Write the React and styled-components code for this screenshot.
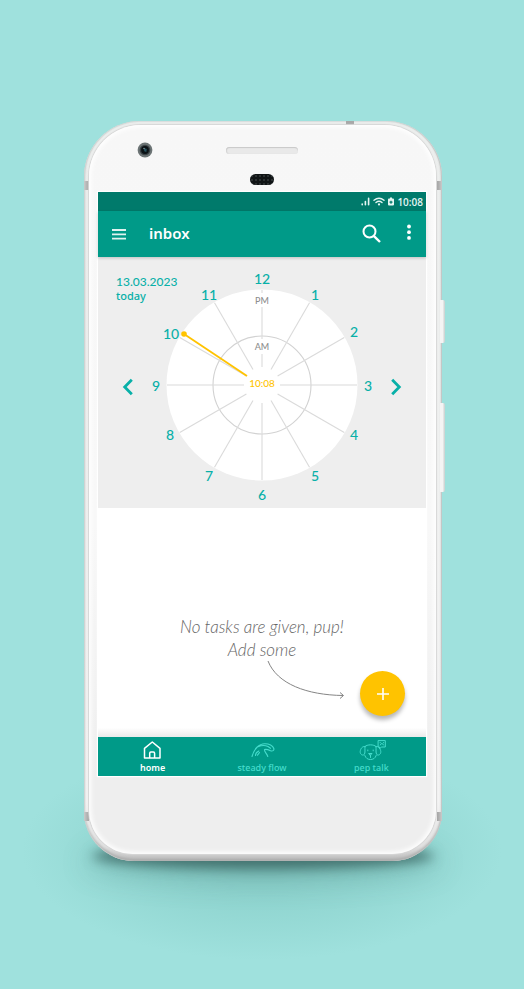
import React from "react";
import styled, { createGlobalStyle, css } from "styled-components";

const teal = "#009a88";
const aqua = "#08b0a8";
const amber = "#ffc300";

const GlobalStyle = createGlobalStyle`
  *, *::before, *::after { box-sizing: border-box; }
  body {
    margin: 0;
    background: #9fe1dd;
    font-family: "Noto Sans", "Open Sans", sans-serif;
  }
  button { border: 0; padding: 0; background: none; font: inherit; color: inherit; cursor: pointer; }
  svg { display: block; }
`;

const Page = styled.div`
  min-height: 100vh;
  padding: 121px 82px 128px 84px;
  display: flex;
  justify-content: center;
  align-items: flex-start;
  background: radial-gradient(ellipse 240px 110px at 50% 850px, #87cbc6 0%, #90d5d0 45%, rgba(159, 225, 221, 0) 100%), #9fe1dd;
`;

const Stage = styled.div`
  position: relative;
  z-index: 0;
  flex: 1;
  max-width: 420px;
  &::before {
    content: "";
    position: absolute;
    z-index: -1;
    left: 14px;
    right: 14px;
    bottom: 8px;
    height: 14px;
    border-radius: 50%;
    box-shadow: 0 10px 12px 6px rgba(45, 85, 82, 0.7), 0 16px 28px 12px rgba(65, 125, 120, 0.3);
  }
`;

const Frame = styled.div`
  position: relative;
  z-index: 0;
  padding: 4px 6px 7px 5px;
  border-radius: 56px 56px 50px 50px;
  background: linear-gradient(180deg, #eceeed 0%, #f4f4f4 92%, #e2e2e2 98%, #bcbcbc 100%);
  box-shadow: inset 1px 0 1px #cfd3d2, inset -1px 0 1px #c2c6c5, inset 0 1px 1px #dde2e1, inset 0 -2px 3px #a9a9a9;
`;

const Glass = styled.div`
  position: relative;
  padding: 0 10px 0 9px;
  border-radius: 52px 52px 44px 44px;
  background: linear-gradient(180deg, #f7f7f7 0%, #f8f8f8 55%, #eeeeee 90%, #eeeeee 100%);
  box-shadow: 0 0 1px 1px #d6d6d6, inset 0 0 5px 2px #ffffff;
`;

const Band = styled.span`
  position: absolute;
  width: 5px;
  height: 9px;
  background: linear-gradient(90deg, #cacaca, #a2a2a2);
  ${(p) => (p.$side === "left" ? css`left: 0;` : css`right: 0; transform: scaleX(-1);`)}
  ${(p) => (p.$end === "top" ? css`top: 60px;` : css`bottom: 40px;`)}
`;

const TopBand = styled.span`
  position: absolute;
  top: 0;
  right: 88px;
  width: 8px;
  height: 4px;
  background: #a8a8a8;
`;

const SideKey = styled.span`
  position: absolute;
  z-index: -1;
  right: -3px;
  top: ${(p) => p.$top}px;
  width: 5px;
  height: ${(p) => p.$length}px;
  border-radius: 0 2px 2px 0;
  background: linear-gradient(90deg, #f4f4f4 50%, #c7cecd);
`;

const UpperBezel = styled.div`
  height: 67px;
  display: grid;
  grid-template-columns: 1fr 72px 1fr;
`;

const Camera = styled.svg`
  width: 16px;
  height: 16px;
  margin: 17px 0 0 39px;
`;

const Openings = styled.div`
  display: flex;
  flex-direction: column;
  align-items: center;
  gap: 20px;
  padding-top: 22px;
`;

const Speaker = styled.span`
  width: 72px;
  height: 7px;
  border-radius: 4px;
  background: #e9e9e9;
  box-shadow: inset 0 1px 1px #c8c8c8, inset 1px 0 1px #d4d4d4;
`;

const Sensor = styled.span`
  width: 24px;
  height: 11px;
  border-radius: 6px;
  background: radial-gradient(circle, #2b3031 1px, #101415 1px) 0 0 / 4px 4px;
`;

const LowerBezel = styled.div`
  height: 78px;
`;

const Screen = styled.main`
  display: flex;
  flex-direction: column;
  background: #ffffff;
  box-shadow: 0 0 1px 1px #ffffff;
`;

const StatusBar = styled.div`
  height: 19px;
  padding-right: 3px;
  display: flex;
  align-items: center;
  justify-content: flex-end;
  gap: 3px;
  background: #007a6b;
  color: #e5f6f3;
  font-family: "Open Sans", sans-serif;
  font-size: 10px;
  font-weight: 600;
`;

const AppBar = styled.header`
  position: relative;
  height: 46px;
  padding: 0 12px;
  display: flex;
  align-items: center;
  background: ${teal};
  color: #ffffff;
  box-shadow: 0 1px 3px rgba(0, 0, 0, 0.2);
`;

const BarButton = styled.button`
  width: ${(p) => p.$size}px;
  height: 32px;
  display: grid;
  place-items: center;
`;

const Title = styled.h1`
  flex: 1;
  margin: 0 0 0 20px;
  padding-bottom: 2px;
  font-size: 15px;
  line-height: 20px;
  font-weight: 600;
`;

const BarActions = styled.div`
  display: flex;
  gap: 14px;
  margin-right: -7px;
`;

const ClockPanel = styled.section`
  height: 251px;
  display: grid;
  grid-template-columns: 1fr 236px 1fr;
  grid-template-rows: 100%;
  align-items: center;
  background: #eeeeee;
  color: ${aqua};
`;

const DateLabel = styled.div`
  grid-area: 1 / 1 / 2 / 3;
  align-self: start;
  padding: 17px 0 0 18px;
  font-family: Lato, "Open Sans", sans-serif;
  font-size: 12px;
  line-height: 15px;
  font-weight: 500;
`;

const Today = styled.span`
  display: block;
  font-family: "Noto Sans", sans-serif;
  font-size: 11px;
  line-height: 14px;
`;

const DayButton = styled.button`
  grid-area: 1 / ${(p) => p.$column};
  justify-self: ${(p) => p.$side};
  width: 32px;
  height: 32px;
  margin-top: 8px;
  display: grid;
  place-items: center;
`;

const Dial = styled.svg`
  grid-area: 1 / 2;
  align-self: start;
  width: 236px;
  height: 250px;
  pointer-events: none;
  font-family: Lato, "Open Sans", sans-serif;
  text { text-anchor: middle; font-weight: 500; }
`;

const Tasks = styled.section`
  height: 229px;
  display: grid;
  grid-template-rows: 1fr auto;
  background: linear-gradient(180deg, #ffffff 96%, #eaeaea 100%);
`;

const EmptyNote = styled.p`
  margin: 0;
  padding-top: 107px;
  text-align: center;
  font-family: Lato, "Open Sans", sans-serif;
  font-style: italic;
  font-weight: 300;
  font-size: 17px;
  line-height: 23px;
  color: #666666;
`;

const AddRow = styled.div`
  display: flex;
  justify-content: flex-end;
  align-items: flex-start;
  gap: 14px;
  padding: 0 21px 21px 0;
`;

const Pointer = styled.svg`
  width: 82px;
  height: 42px;
  margin-top: -11px;
`;

const AddButton = styled.button`
  width: 45px;
  height: 45px;
  border-radius: 50%;
  display: grid;
  place-items: center;
  background: ${amber};
  box-shadow: 0 4px 4px rgba(0, 0, 0, 0.28);
`;

const TabBar = styled.nav`
  height: 39px;
  display: grid;
  grid-template-columns: repeat(3, 1fr);
  background: ${teal};
`;

const Tab = styled.a`
  padding-top: 3px;
  display: flex;
  flex-direction: column;
  align-items: center;
  gap: 1px;
  color: ${(p) => (p.$active ? "#ffffff" : "#45dccc")};
  font-size: 9px;
  line-height: 12px;
  font-weight: ${(p) => (p.$active ? 600 : 500)};
  text-decoration: none;
`;

const TabIcon = styled.svg`
  width: 30px;
  height: 21px;
  fill: none;
  stroke: currentColor;
  stroke-linecap: round;
  stroke-linejoin: round;
`;

const hours = [
  [12, 118, 27], [1, 171, 43], [2, 210, 80], [3, 224, 134], [4, 210, 183], [5, 171, 224],
  [6, 118, 243], [7, 65, 224], [8, 26, 183], [9, 12, 134], [10, 27, 82], [11, 65, 43],
];

function ClockDial() {
  return (
    <Dial viewBox="0 0 236 250" role="img" aria-label="Clock face showing 10:08">
      <circle cx="118" cy="128" r="95.5" fill="#fff" />
      <g stroke="#dadada" strokeWidth="1.1" fill="none">
        <circle cx="118" cy="128" r="49" stroke="#d2d2d2" />
        {hours.map(([hour]) => {
          const a = (hour * Math.PI) / 6;
          return (
            <line
              key={hour}
              x1={118 + 18 * Math.sin(a)}
              y1={128 - 18 * Math.cos(a)}
              x2={118 + 95 * Math.sin(a)}
              y2={128 - 95 * Math.cos(a)}
            />
          );
        })}
      </g>
      <rect x="108" y="36" width="20" height="14" fill="#fff" />
      <rect x="108" y="82" width="20" height="15" fill="#fff" />
      <g fill="#8e8e8e" fontSize="9">
        <text x="118" y="47">PM</text>
        <text x="118" y="93">AM</text>
      </g>
      <path d="M40 77 103 119" stroke={amber} strokeWidth="1.8" />
      <circle cx="40" cy="77" r="2.8" fill={amber} />
      <text x="118" y="130" fontSize="10" fill={amber}>10:08</text>
      <g fill={aqua} fontSize="14">
        {hours.map(([hour, x, y]) => (
          <text key={hour} x={x} y={y}>{hour}</text>
        ))}
      </g>
    </Dial>
  );
}

function StatusIcons() {
  return (
    <>
      <svg width="9" height="9" viewBox="0 0 9 9" stroke="currentColor" strokeWidth="1.6" strokeLinecap="round">
        <path d="M1.2 7v.8M4.400 4.600v3.200M7.600 1.400v6.400" />
      </svg>
      <svg width="12" height="9" viewBox="0 0 12 9" fill="none" stroke="currentColor" strokeWidth="1.400" strokeLinecap="round">
        <path d="M1 3.3Q6-.9 11 3.3M3 5.500q3-2.400 6 0" />
        <circle cx="6" cy="7.400" r="1.100" fill="currentColor" stroke="none" />
      </svg>
      <svg width="6" height="9" viewBox="0 0 6 9">
        <path d="M2 .5h2v1h1q1 0 1 1v5q0 1-1 1H1q-1 0-1-1v-5q0-1 1-1h1z" fill="currentColor" />
        <path d="M3 3.700v3M1.500 5.200h3" stroke="#007a6b" strokeWidth="1.200" />
      </svg>
    </>
  );
}

export default function App() {
  return (
    <>
      <GlobalStyle />
      <Page>
        <Stage>
          <Frame>
            <SideKey $top={179} $length={43} />
            <SideKey $top={282} $length={89} />
            <Band $side="left" $end="top" />
            <Band $side="right" $end="top" />
            <Band $side="left" $end="bottom" />
            <Band $side="right" $end="bottom" />
            <TopBand />
            <Glass>
              <UpperBezel>
                <Camera viewBox="0 0 16 16">
                  <circle cx="8" cy="8" r="7.4" fill="#6c7475" />
                  <circle cx="8" cy="8" r="5.3" fill="#3a4245" />
                  <circle cx="8" cy="8" r="3.9" fill="#0a1115" />
                  <path d="m6.8 6 3 1-.5 3-2-.7z" fill="#24505c" />
                  <circle cx="7" cy="6.5" r=".7" fill="#8fa4a8" />
                </Camera>
                <Openings>
                  <Speaker />
                  <Sensor />
                </Openings>
              </UpperBezel>
              <Screen>
                <StatusBar>
                  <StatusIcons />
                  <time>10:08</time>
                </StatusBar>
                <AppBar>
                  <BarButton $size={19} aria-label="Menu">
                    <svg width="15" height="12" viewBox="0 0 15 12" stroke="#dff3f0" strokeWidth="1.8">
                      <path d="M0 2h14M0 6.3h14M0 10.6h14" />
                    </svg>
                  </BarButton>
                  <Title>inbox</Title>
                  <BarActions>
                    <BarButton $size={24} aria-label="Search">
                      <svg width="20" height="20" viewBox="0 0 20 20" fill="none" stroke="#fff" strokeWidth="2">
                        <circle cx="8.5" cy="7.5" r="6" />
                        <path d="m12.700 11.800 6.300 6.200" strokeWidth="2.4" />
                      </svg>
                    </BarButton>
                    <BarButton $size={24} aria-label="More options">
                      <svg width="6" height="20" viewBox="0 0 6 20" fill="#fff">
                        <circle cx="3" cy="2.500" r="1.900" />
                        <circle cx="3" cy="8.200" r="1.900" />
                        <circle cx="3" cy="13.900" r="1.900" />
                      </svg>
                    </BarButton>
                  </BarActions>
                </AppBar>
                <ClockPanel>
                  <DateLabel>
                    13.03.2023
                    <Today>today</Today>
                  </DateLabel>
                  <DayButton $column={1} $side="end" aria-label="Previous day">
                    <svg width="12" height="18" viewBox="0 0 12 18" fill="none" stroke="currentColor" strokeWidth="2.8">
                      <path d="M9.8 1.7 2.7 9l7.1 7.3" />
                    </svg>
                  </DayButton>
                  <ClockDial />
                  <DayButton $column={3} $side="start" aria-label="Next day">
                    <svg width="12" height="18" viewBox="0 0 12 18" fill="none" stroke="currentColor" strokeWidth="2.8">
                      <path d="M2.2 1.7 9.3 9l-7.1 7.3" />
                    </svg>
                  </DayButton>
                </ClockPanel>
                <Tasks>
                  <EmptyNote>
                    No tasks are given, pup!
                    <br />
                    Add some
                  </EmptyNote>
                  <AddRow>
                    <Pointer viewBox="0 0 82 42" fill="none" stroke="#858585" strokeWidth="1">
                      <path d="M4 1C13 24 43 35 79 35.5M76 32.5l3.5 3-3.5 3" />
                    </Pointer>
                    <AddButton aria-label="Add task">
                      <svg width="12" height="12" viewBox="0 0 12 12" stroke="#fff" strokeWidth="1.6">
                        <path d="M6 0v12M0 6h12" />
                      </svg>
                    </AddButton>
                  </AddRow>
                </Tasks>
                <TabBar>
                  <Tab href="#home" $active>
                    <TabIcon viewBox="0 0 30 21" strokeWidth="1.5">
                      <path d="M6.500 8.400 14.300 2l7.700 6.400v9.700H6.500zM11.700 18v-4.800q0-1.200 1.200-1.200h2.500q1.200 0 1.200 1.200V18" />
                    </TabIcon>
                    home
                  </Tab>
                  <Tab href="#steady-flow">
                    <TabIcon viewBox="0 0 30 21" strokeWidth="1.1">
                      <path d="M5 16.500C7 9 12 3.600 18 3.700c4 0 8 2 8.800 4.800 .6 2-1.300 3-3.300 2.200-2.200-1-4-1.800-6-1.200-.3 2.500 2.200 3.800 3.300 7M11 6.700c4-1.700 7-1.700 10-.2l2.500 1.800M8.500 15.500c0-2 1-3.400 3.300-4.500M10.500 15.200l2-2.700" />
                    </TabIcon>
                    steady flow
                  </Tab>
                  <Tab href="#pep-talk">
                    <TabIcon viewBox="0 0 30 21" strokeWidth="1">
                      <path d="M9 6.500c2-2.300 9-2.300 11 0M9 6.500c-3-.5-4.500 2.500-4.800 5-.2 2.800 2.300 4.500 4 3 1.300-1.500.5-5 .8-8M20 6.500c3-.5 4.500 2.500 4.800 5 .2 2.800-2.300 4.500-4 3-1.300-1.500-.5-5-.8-8M8.800 15.500c1 3 3.200 4 5.700 4s4.700-1 5.700-4M13 13.500h3l-1.500 1.600zM14.500 15v2.500M11.800 10v.8M17.200 10v.8" />
                      <path d="M22.500.6h6.800v6.400h-3.600l-2.200 1.600V7h-1z" />
                      <path d="M24.300 5q1.600-3.500 3.200 0M24.200 2.500v.3M27.600 2.500v.3" />
                    </TabIcon>
                    pep talk
                  </Tab>
                </TabBar>
              </Screen>
              <LowerBezel />
            </Glass>
          </Frame>
        </Stage>
      </Page>
    </>
  );
}
